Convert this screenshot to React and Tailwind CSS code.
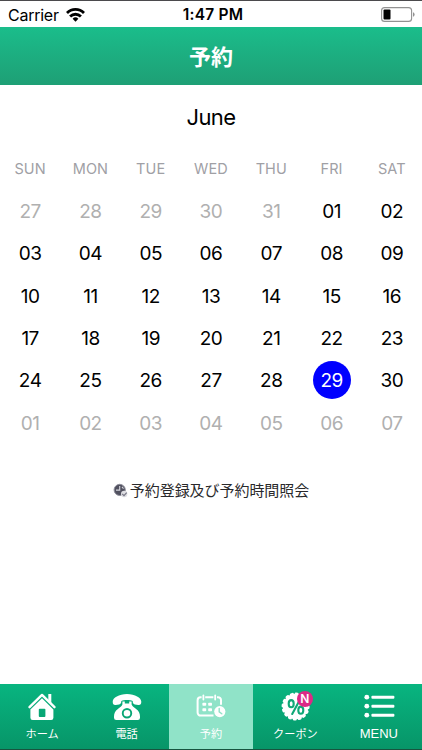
const WEEKDAYS = ["SUN", "MON", "TUE", "WED", "THU", "FRI", "SAT"];

// Six weeks shown for June, padded with the neighbouring months
const DAYS = [
  ...[27, 28, 29, 30, 31].map((day) => ({ day, outside: true })),
  ...Array.from({ length: 30 }, (_, i) => ({ day: i + 1, outside: false })),
  ...[1, 2, 3, 4, 5, 6, 7].map((day) => ({ day, outside: true })),
];

const SELECTED_DAY = 29;

function StatusBar() {
  return (
    <div className="grid h-[27px] grid-cols-3 items-center border-t border-[#4b4a4d] bg-white pt-px pl-2 pr-[7px] text-black">
      <div className="flex items-center gap-[7px] text-[16px] leading-none tracking-[-0.25px]">
        Carrier
        <svg className="h-[14px] w-[19px]" viewBox="0 0 19 14" fill="none" stroke="currentColor" strokeWidth="2.8">
          <path d="M1 5a12 12 0 0 1 17 0" />
          <path d="M4.1 8.5a7.6 7.6 0 0 1 10.8 0" />
          <path d="M6.6 10.8a4.1 4.1 0 0 1 5.8 0L9.5 13.7z" fill="currentColor" stroke="none" />
        </svg>
      </div>
      <div className="pl-[3px] text-center text-[15.5px] leading-none font-semibold tracking-[0.25px]">1:47 PM</div>
      <svg className="h-[15px] w-[34px] justify-self-end" viewBox="0 0 34 15">
        <rect x="0.6" y="0.6" width="30" height="13.8" rx="3" fill="none" stroke="#929292" strokeWidth="1.1" />
        <rect x="2.5" y="2.5" width="7" height="10" rx="1" fill="#000" />
        <path d="M32 5.2q1.6.5 1.6 2.3T32 9.8z" fill="#929292" />
      </svg>
    </div>
  );
}

function Calendar() {
  return (
    <section className="text-black">
      <h2 className="pt-[17px] text-center text-[22px] leading-[30px] font-normal tracking-[-0.6px]">June</h2>
      <div className="mt-[27px] grid grid-cols-7 text-center text-[14.5px] leading-5 tracking-[0.1px] text-[#a0a0a5]">
        {WEEKDAYS.map((name) => (
          <div key={name}>{name}</div>
        ))}
      </div>
      <div className="mt-[11px] grid auto-rows-[42.3px] grid-cols-7 text-[19px] tracking-[-0.5px]">
        {DAYS.map(({ day, outside }, i) => {
          const selected = !outside && day === SELECTED_DAY;
          return (
            <div key={i} className="flex items-center justify-center">
              <span
                className={`flex size-[38px] items-center justify-center rounded-full pt-px leading-none ${
                  selected ? "bg-[#0000ff] text-white" : outside ? "text-[#b0b0b0]" : "text-black"
                }`}
              >
                {String(day).padStart(2, "0")}
              </span>
            </div>
          );
        })}
      </div>
    </section>
  );
}

function ClockCheckIcon() {
  return (
    <svg className="size-[15px] shrink-0" viewBox="0 0 15 15" fill="none">
      <circle cx="6.7" cy="6.9" r="5.6" fill="#51515f" stroke="#8d8d99" />
      <path d="M6.7 2.9v4.2H3M9 3.9l1.5 1.8" stroke="#d5d5dd" strokeWidth="1.1" />
      <circle cx="11.2" cy="11" r="3.2" fill="#dedee3" />
      <path d="M9.2 10.8l1.8 1.8 2.7-3" stroke="#777785" strokeWidth="1.2" />
    </svg>
  );
}

function HomeIcon() {
  return (
    <svg className="h-8 w-9" viewBox="0 0 36 32" fill="none">
      <path d="M24.3 4h3v9l-3-3z" fill="#fff" />
      <path d="M5.5 17.2L18 4.9l12.5 12.3" stroke="#fff" strokeWidth="2.4" strokeLinecap="round" strokeLinejoin="round" />
      <path
        fillRule="evenodd"
        d="M18 8.3l11.4 11.2v8.3a2.2 2.2 0 0 1-2.2 2.2H8.6a2.2 2.2 0 0 1-2.2-2.2v-8.3zM15.7 18.7a.9.9 0 0 0-.9.9v6.5q0 .9.9.9h4.8q.9 0 .9-.9v-6.5a.9.9 0 0 0-.9-.9z"
        fill="#fff"
      />
    </svg>
  );
}

function PhoneIcon() {
  return (
    <svg className="h-8 w-9" viewBox="0 0 36 32" fill="#fff">
      <path d="M18 4C10 4 3.7 7.8 3.7 11.7c0 2.5 1.2 3.5 3 3.2l3.4-.5c1.6-.3 2.3-1.3 2.2-3.4 1.5-.8 3.5-1.1 5.7-1.1s4.2.3 5.7 1.1c-.1 2.1.6 3.1 2.2 3.4l3.4.5c1.8.3 3-.7 3-3.2C32.3 7.8 26 4 18 4z" />
      <path
        fillRule="evenodd"
        d="M13.4 11.4h2.4V13.6h4.4v-2.2h2.4v3.2c1 2.2 2.7 3.2 4.8 4.6 2.2 1.6 3.6 4 3.6 7.2v1.4q0 2.2-2.2 2.2H7.2Q5 30 5 27.8v-1.4c0-3.2 1.4-5.6 3.6-7.2 2.1-1.4 3.8-2.4 4.8-4.6zM18 18a5.2 5.2 0 1 0 0 10.4A5.2 5.2 0 0 0 18 18zM18 19.9a3.3 3.3 0 1 1 0 6.6 3.3 3.3 0 0 1 0-6.6z"
      />
    </svg>
  );
}

function CalendarIcon() {
  return (
    <svg className="h-8 w-9" viewBox="0 0 36 32" fill="none">
      <path
        d="M20.5 25.6H7.6a3 3 0 0 1-3-3V10.2a3 3 0 0 1 3-3h1M12.2 7.2h8.2M24 7.2h1a3 3 0 0 1 3 3v4.6"
        stroke="#fff"
        strokeWidth="2"
      />
      <path d="M10.4 5.3v4.2M22.2 5.3v4.2" stroke="#fff" strokeWidth="1.8" strokeLinecap="round" />
      <g fill="#fff">
        <rect x="9.4" y="12.8" width="3.8" height="3" rx=".8" />
        <rect x="15.2" y="12.8" width="3.8" height="3" rx=".8" />
        <rect x="9.4" y="18.2" width="3.8" height="3" rx=".8" />
        <rect x="15.2" y="18.2" width="3.8" height="3" rx=".8" />
        <circle cx="26.8" cy="21.6" r="5.6" />
      </g>
      <path d="M26.2 18.5v3.3l2.6 2" stroke="#8fe3c7" strokeWidth="1.4" strokeLinecap="round" />
    </svg>
  );
}

function CouponIcon() {
  return (
    <div className="relative h-8 w-9">
      <svg className="h-8 w-9" viewBox="0 0 36 32" fill="none">
        <circle cx="18.6" cy="16.5" r="12.7" fill="#fff" />
        <circle cx="18.6" cy="16.5" r="12.7" stroke="#fff" strokeWidth="2.6" strokeLinecap="round" strokeDasharray="1.5 3.488" />
        <g stroke="#10a877" strokeWidth="2.1">
          <ellipse cx="14.2" cy="13.7" rx="2.5" ry="3.6" />
          <ellipse cx="23.8" cy="20.2" rx="2.5" ry="3.6" />
          <path d="M22.8 10l-7.6 14" strokeLinecap="round" />
        </g>
      </svg>
      {/* New-item badge on the corner of the icon */}
      <span className="absolute top-[1px] left-[19.5px] flex size-4 items-center justify-center rounded-full bg-[#dc2986] text-[12px] leading-none font-semibold text-white">
        N
      </span>
    </div>
  );
}

function MenuIcon() {
  return (
    <svg className="h-8 w-9" viewBox="0 0 36 32" fill="#fff">
      <circle cx="4.8" cy="7.2" r="2.4" />
      <circle cx="4.8" cy="16.2" r="2.4" />
      <circle cx="4.8" cy="25.2" r="2.4" />
      <rect x="9.4" y="5.7" width="23" height="3" rx="1" />
      <rect x="9.4" y="14.7" width="23" height="3" rx="1" />
      <rect x="9.4" y="23.7" width="23" height="3" rx="1" />
    </svg>
  );
}

const TABS = [
  { label: "ホーム", Icon: HomeIcon },
  { label: "電話", Icon: PhoneIcon },
  { label: "予約", Icon: CalendarIcon, active: true },
  { label: "クーポン", Icon: CouponIcon },
  { label: "MENU", Icon: MenuIcon, latin: true },
];

function TabBar() {
  return (
    <nav className="grid h-[66px] grid-cols-5 border-b border-[#17543f] bg-linear-to-b from-[#08b580] to-[#079568] text-white">
      {TABS.map(({ label, Icon, active, latin }) => (
        <button key={label} className={`flex flex-col items-center pt-[6px] ${active ? "bg-[#90e3c8]" : ""}`}>
          <Icon />
          <span
            className={`h-4 leading-4 whitespace-nowrap ${
              latin ? "mt-1 pr-[2px] font-['Liberation_Sans',sans-serif] text-[13px]" : "mt-[4px] text-[11.2px]"
            }`}
          >
            {label}
          </span>
        </button>
      ))}
    </nav>
  );
}

export default function App() {
  return (
    <div className="flex h-screen flex-col overflow-hidden bg-white font-[Inter,'Noto_Sans_CJK_JP',sans-serif]">
      <StatusBar />
      <header className="flex h-[58px] items-center justify-center bg-linear-to-b from-[#1abd8b] to-[#1e9f75] pt-[3px] text-[22px] font-bold text-white">
        予約
      </header>
      <main className="flex-1">
        <Calendar />
        <div className="mt-[36px] flex items-center justify-center gap-[2px] text-[15px] leading-[22px] tracking-[-0.05px] text-[#29292b]">
          <ClockCheckIcon />
          予約登録及び予約時間照会
        </div>
      </main>
      <TabBar />
    </div>
  );
}
